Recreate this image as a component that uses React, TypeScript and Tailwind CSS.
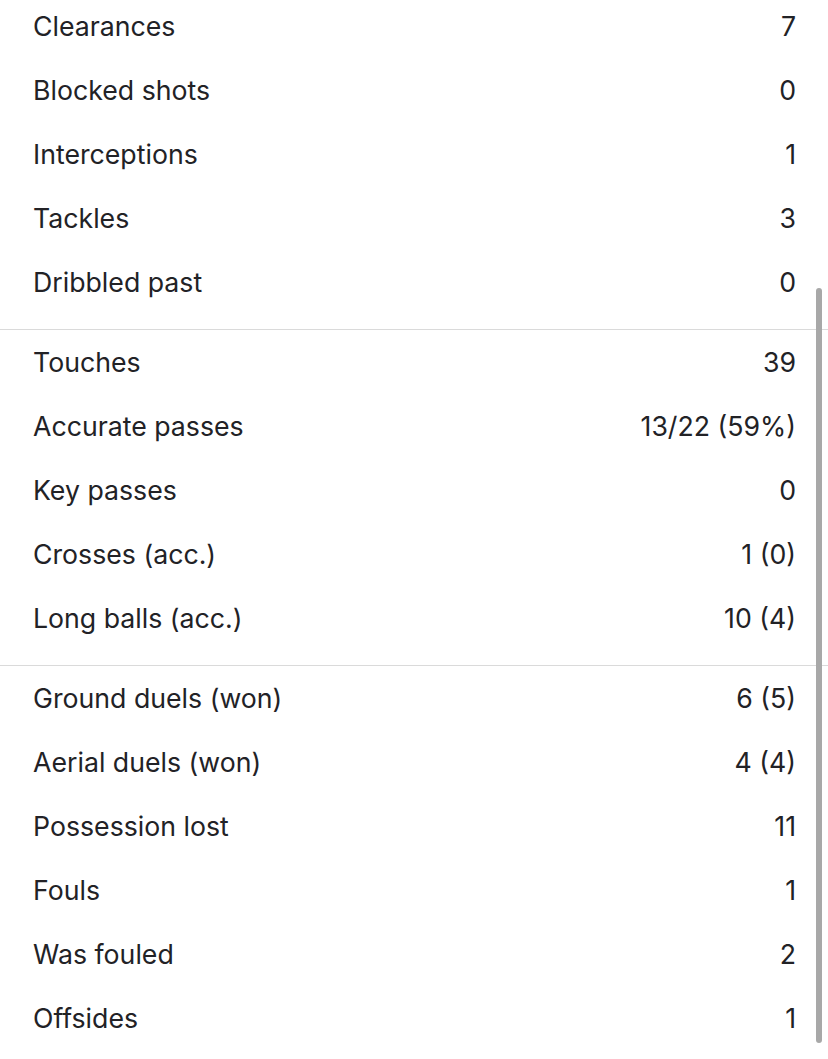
import React from 'react'

type Stat = { label: string; value: string }

const groups: Stat[][] = [
  [
    { label: 'Clearances', value: '7' },
    { label: 'Blocked shots', value: '0' },
    { label: 'Interceptions', value: '1' },
    { label: 'Tackles', value: '3' },
    { label: 'Dribbled past', value: '0' },
  ],
  [
    { label: 'Touches', value: '39' },
    { label: 'Accurate passes', value: '13/22 (59%)' },
    { label: 'Key passes', value: '0' },
    { label: 'Crosses (acc.)', value: '1 (0)' },
    { label: 'Long balls (acc.)', value: '10 (4)' },
  ],
  [
    { label: 'Ground duels (won)', value: '6 (5)' },
    { label: 'Aerial duels (won)', value: '4 (4)' },
    { label: 'Possession lost', value: '11' },
    { label: 'Fouls', value: '1' },
    { label: 'Was fouled', value: '2' },
    { label: 'Offsides', value: '1' },
  ],
]

export default function App() {
  return (
    <div className="relative h-[1059px] w-[828px] overflow-hidden bg-white text-[#222226] font-['Inter',sans-serif]">
      <div className="mt-[-6px]">
        {groups.map((rows, gi) => (
          <section
            key={gi}
            className={gi < groups.length - 1 ? 'pb-[15px] border-b border-[#dadada]' : ''}
          >
            {rows.map((r) => (
              <div key={r.label} className="flex h-16 items-center justify-between pl-[33px] pr-[32px] text-[26.7px]">
                <span>{r.label}</span>
                <span>{r.value}</span>
              </div>
            ))}
          </section>
        ))}
      </div>
      {/* overlay scrollbar */}
      <div className="absolute left-[816px] top-[288px] h-[755px] w-[6px] rounded-full bg-[#a8a8a8]" />
    </div>
  )
}
